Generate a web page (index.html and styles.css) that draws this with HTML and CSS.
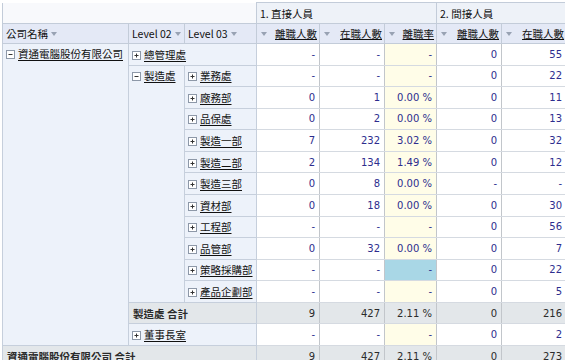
FILE: index.html
```html
<!DOCTYPE html>
<html lang="zh-Hant">
<head>
<meta charset="utf-8">
<link rel="stylesheet" href="styles.css">
</head>
<body>
<table class="pivot">
<colgroup>
<col class="c-co"><col class="c-l2"><col class="c-l3"><col class="c-a"><col class="c-b"><col class="c-r"><col class="c-a2"><col class="c-b2">
</colgroup>
<thead>
<tr class="h1">
<th colspan="3" class="corner"></th>
<th colspan="3" class="grp">1. 直接人員</th>
<th colspan="2" class="grp">2. 間接人員</th>
</tr>
<tr class="h2">
<th class="rh">公司名稱 <span class="tri"></span></th>
<th class="rh lv dash">Level 02 <span class="tri"></span></th>
<th class="rh lv">Level 03 <span class="tri"></span></th>
<th class="mh"><span class="tri lft"></span><u>離職人數</u></th>
<th class="mh"><span class="tri lft"></span><u>在職人數</u></th>
<th class="mh"><span class="tri lft"></span><u>離職率</u></th>
<th class="mh"><span class="tri lft"></span><u>離職人數</u></th>
<th class="mh"><span class="tri lft"></span><u>在職人數</u></th>
</tr>
</thead>
<tbody>
<tr>
<td rowspan="14" class="lab co"><svg class="ic" width="9" height="9" viewBox="0 0 9 9"><rect x=".5" y=".5" width="8" height="8" fill="#fff" stroke="#8d98a8"/><path d="M2.5 4.5h4" stroke="#333"/></svg><u>資通電腦股份有限公司</u></td>
<td colspan="2" class="lab"><svg class="ic" width="9" height="9" viewBox="0 0 9 9"><rect x=".5" y=".5" width="8" height="8" fill="#fff" stroke="#8d98a8"/><path d="M2.5 4.5h4M4.5 2.5v4" stroke="#333"/></svg><u>總管理處</u></td>
<td class="n">-</td><td class="n">-</td><td class="n y">-</td><td class="n">0</td><td class="n">55</td>
</tr>
<tr>
<td rowspan="11" class="lab co"><svg class="ic" width="9" height="9" viewBox="0 0 9 9"><rect x=".5" y=".5" width="8" height="8" fill="#fff" stroke="#8d98a8"/><path d="M2.5 4.5h4" stroke="#333"/></svg><u>製造處</u></td>
<td class="lab l3"><svg class="ic" width="9" height="9" viewBox="0 0 9 9"><rect x=".5" y=".5" width="8" height="8" fill="#fff" stroke="#8d98a8"/><path d="M2.5 4.5h4M4.5 2.5v4" stroke="#333"/></svg><u>業務處</u></td>
<td class="n">-</td><td class="n">-</td><td class="n y">-</td><td class="n">0</td><td class="n">22</td>
</tr>
<tr>
<td class="lab l3"><svg class="ic" width="9" height="9" viewBox="0 0 9 9"><rect x=".5" y=".5" width="8" height="8" fill="#fff" stroke="#8d98a8"/><path d="M2.5 4.5h4M4.5 2.5v4" stroke="#333"/></svg><u>廠務部</u></td>
<td class="n">0</td><td class="n">1</td><td class="n y">0.00 %</td><td class="n">0</td><td class="n">11</td>
</tr>
<tr>
<td class="lab l3"><svg class="ic" width="9" height="9" viewBox="0 0 9 9"><rect x=".5" y=".5" width="8" height="8" fill="#fff" stroke="#8d98a8"/><path d="M2.5 4.5h4M4.5 2.5v4" stroke="#333"/></svg><u>品保處</u></td>
<td class="n">0</td><td class="n">2</td><td class="n y">0.00 %</td><td class="n">0</td><td class="n">13</td>
</tr>
<tr>
<td class="lab l3"><svg class="ic" width="9" height="9" viewBox="0 0 9 9"><rect x=".5" y=".5" width="8" height="8" fill="#fff" stroke="#8d98a8"/><path d="M2.5 4.5h4M4.5 2.5v4" stroke="#333"/></svg><u>製造一部</u></td>
<td class="n">7</td><td class="n">232</td><td class="n y">3.02 %</td><td class="n">0</td><td class="n">32</td>
</tr>
<tr>
<td class="lab l3"><svg class="ic" width="9" height="9" viewBox="0 0 9 9"><rect x=".5" y=".5" width="8" height="8" fill="#fff" stroke="#8d98a8"/><path d="M2.5 4.5h4M4.5 2.5v4" stroke="#333"/></svg><u>製造二部</u></td>
<td class="n">2</td><td class="n">134</td><td class="n y">1.49 %</td><td class="n">0</td><td class="n">12</td>
</tr>
<tr>
<td class="lab l3"><svg class="ic" width="9" height="9" viewBox="0 0 9 9"><rect x=".5" y=".5" width="8" height="8" fill="#fff" stroke="#8d98a8"/><path d="M2.5 4.5h4M4.5 2.5v4" stroke="#333"/></svg><u>製造三部</u></td>
<td class="n">0</td><td class="n">8</td><td class="n y">0.00 %</td><td class="n">-</td><td class="n">-</td>
</tr>
<tr>
<td class="lab l3"><svg class="ic" width="9" height="9" viewBox="0 0 9 9"><rect x=".5" y=".5" width="8" height="8" fill="#fff" stroke="#8d98a8"/><path d="M2.5 4.5h4M4.5 2.5v4" stroke="#333"/></svg><u>資材部</u></td>
<td class="n">0</td><td class="n">18</td><td class="n y">0.00 %</td><td class="n">0</td><td class="n">30</td>
</tr>
<tr>
<td class="lab l3"><svg class="ic" width="9" height="9" viewBox="0 0 9 9"><rect x=".5" y=".5" width="8" height="8" fill="#fff" stroke="#8d98a8"/><path d="M2.5 4.5h4M4.5 2.5v4" stroke="#333"/></svg><u>工程部</u></td>
<td class="n">-</td><td class="n">-</td><td class="n y">-</td><td class="n">0</td><td class="n">56</td>
</tr>
<tr>
<td class="lab l3"><svg class="ic" width="9" height="9" viewBox="0 0 9 9"><rect x=".5" y=".5" width="8" height="8" fill="#fff" stroke="#8d98a8"/><path d="M2.5 4.5h4M4.5 2.5v4" stroke="#333"/></svg><u>品管部</u></td>
<td class="n">0</td><td class="n">32</td><td class="n y">0.00 %</td><td class="n">0</td><td class="n">7</td>
</tr>
<tr>
<td class="lab l3"><svg class="ic" width="9" height="9" viewBox="0 0 9 9"><rect x=".5" y=".5" width="8" height="8" fill="#fff" stroke="#8d98a8"/><path d="M2.5 4.5h4M4.5 2.5v4" stroke="#333"/></svg><u>策略採購部</u></td>
<td class="n">-</td><td class="n">-</td><td class="n sel">-</td><td class="n">0</td><td class="n">22</td>
</tr>
<tr>
<td class="lab l3"><svg class="ic" width="9" height="9" viewBox="0 0 9 9"><rect x=".5" y=".5" width="8" height="8" fill="#fff" stroke="#8d98a8"/><path d="M2.5 4.5h4M4.5 2.5v4" stroke="#333"/></svg><u>產品企劃部</u></td>
<td class="n">-</td><td class="n">-</td><td class="n y">-</td><td class="n">0</td><td class="n">5</td>
</tr>
<tr class="sub">
<td colspan="2" class="lab bold">製造處 合計</td>
<td class="n">9</td><td class="n">427</td><td class="n">2.11 %</td><td class="n">0</td><td class="n">216</td>
</tr>
<tr>
<td colspan="2" class="lab"><svg class="ic" width="9" height="9" viewBox="0 0 9 9"><rect x=".5" y=".5" width="8" height="8" fill="#fff" stroke="#8d98a8"/><path d="M2.5 4.5h4M4.5 2.5v4" stroke="#333"/></svg><u>董事長室</u></td>
<td class="n">-</td><td class="n">-</td><td class="n y">-</td><td class="n">0</td><td class="n">2</td>
</tr>
<tr class="sub">
<td colspan="3" class="lab bold">資通電腦股份有限公司 合計</td>
<td class="n">9</td><td class="n">427</td><td class="n">2.11 %</td><td class="n">0</td><td class="n">273</td>
</tr>
</tbody>
</table>
</body>
</html>
```
FILE: styles.css
```css
body {
  margin: 0;
  background: #ffffff;
  font-family: "Noto Sans CJK TC", "Noto Sans", sans-serif;
}

.pivot {
  border-collapse: collapse;
  table-layout: fixed;
  width: 564px;
  margin: 2px 0 0 2px;
  font-size: 10.5px;
  line-height: 13px;
  color: #111111;
}

.c-co { width: 126px; }
.c-l2 { width: 56px; }
.c-l3 { width: 72px; }
.c-a { width: 63px; }
.c-b { width: 65px; }
.c-r { width: 52px; }
.c-a2 { width: 65px; }
.c-b2 { width: 65px; }

.pivot th,
.pivot td {
  padding: 0 3px;
  white-space: nowrap;
  overflow: hidden;
  font-weight: normal;
  text-align: left;
}

.h1 { height: 21px; }
.h2 { height: 20px; }
.pivot tbody tr { height: 21.57px; }

.corner {
  background: #f8f9fc;
  border-left: 1px solid #c3ccd9;
  border-bottom: 1px solid #c3ccd9;
}

.grp {
  background: #eef2f8;
  border: 1px solid #c3ccd9;
  padding-left: 4px;
  vertical-align: middle;
}

.h2 th {
  background: #e4e9f6;
  border: 1px solid #c3ccd9;
}

.h2 th.dash { border-right: 1px dashed #aab4c4; }

.rh { padding-left: 3px; }

.pivot th.mh {
  text-align: right;
  padding-right: 2px;
  padding-left: 3px;
}
.mh u { text-underline-offset: 1px; }

.tri {
  display: inline-block;
  width: 0;
  height: 0;
  border-left: 3px solid transparent;
  border-right: 3px solid transparent;
  border-top: 4px solid #98a2b3;
  vertical-align: middle;
  margin: 0 2px 2px 1px;
}

.tri.lft {
  float: left;
  margin-top: 5px;
}

.lab {
  background: #edf2fa;
  border: 1px solid #c6cfdc;
  vertical-align: middle;
  padding-left: 2px;
}

.lab.co { vertical-align: top; padding-top: 3px; }
.lab.l3 { padding-left: 3px; }
.lab u { text-underline-offset: 2px; }

.ic {
  vertical-align: -1px;
  margin-right: 3px;
}

.n {
  font-family: "DejaVu Sans", "Liberation Sans", sans-serif;
  font-size: 10px;
  color: #2d2d8e;
  text-align: right !important;
  padding-right: 4px !important;
  background: #ffffff;
  border-right: 1px solid #c2c6cb;
  border-bottom: 1px solid #d5dae1;
}

.n.y { background: #fffde8; }
.n.sel { background: #a9d7e6; }

.sub td { background: #e3e7ea; color: #2b2b2b; }
.sub .lab { background: #e3e7ea; }
.bold { font-weight: bold !important; padding-left: 4px !important; }
```
